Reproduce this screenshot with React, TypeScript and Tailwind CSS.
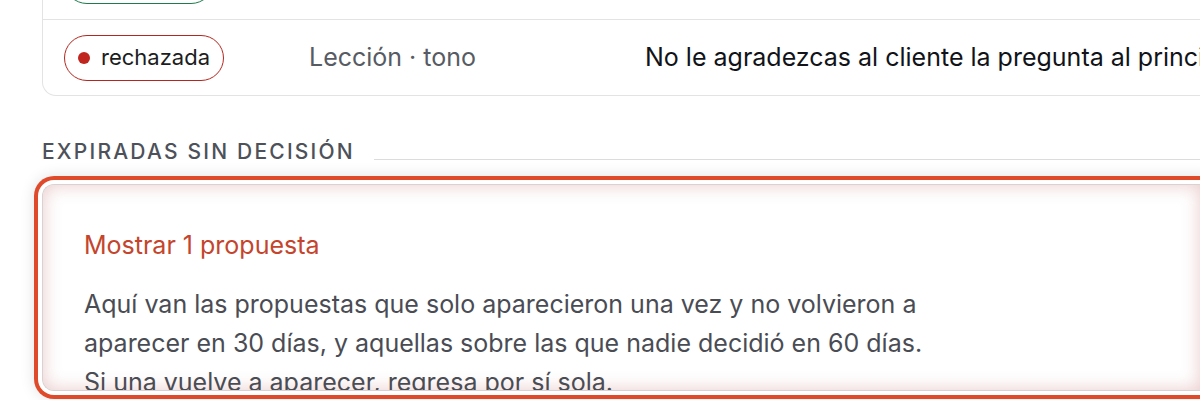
import React from 'react';

type Row = {
    status: 'aprobada' | 'rechazada';
    kind: string;
    text: string;
};

const rows: Row[] = [
    { status: 'aprobada', kind: 'Lección · saludo', text: 'Saluda al cliente por su nombre cuando lo conozcas' },
    { status: 'rechazada', kind: 'Lección · tono', text: 'No le agradezcas al cliente la pregunta al principio de cada respuesta' },
];

const StatusBadge: React.FC<{ status: Row['status'] }> = ({ status }) => {
    const isOk = status === 'aprobada';
    return (
        <span
            className={
                isOk
                    ? 'inline-flex h-[46px] items-center gap-[11px] rounded-full border-[1.5px] border-[#1f7a4d] pl-[13px] pr-[13px] text-[22px] text-[#1b1d21]'
                    : 'inline-flex h-[46px] items-center gap-[11px] rounded-full border-[1.5px] border-[#b3271f] pl-[13px] pr-[13px] text-[22px] text-[#1b1d21]'
            }
        >
            <span className={isOk ? 'h-[12px] w-[12px] rounded-full bg-[#1f8a55]' : 'h-[12px] w-[12px] rounded-full bg-[#c0261d]'} />
            {status}
        </span>
    );
};

export default function App() {
    return (
        <div className="min-h-[400px] overflow-hidden bg-white font-['Inter',sans-serif]">
            <div className="-mt-[58px] pl-[42px]">
                {/* tabla de decisiones recientes */}
                <div className="overflow-hidden rounded-l-[14px] border border-r-0 border-[#e3e3e3]">
                    {rows.map((row, i) => (
                        <div
                            key={row.status}
                            className={
                                i === 0
                                    ? 'flex h-[76px] items-center whitespace-nowrap'
                                    : 'flex h-[76px] items-center whitespace-nowrap border-t border-[#e3e3e3]'
                            }
                        >
                            <div className="w-[266px] shrink-0 pl-[21px]">
                                <StatusBadge status={row.status} />
                            </div>
                            <div className="w-[336px] shrink-0 text-[25px] text-[#575b63]">{row.kind}</div>
                            <div className="text-[25px] text-[#111318]">{row.text}</div>
                        </div>
                    ))}
                </div>

                {/* sección expiradas */}
                <div className="mt-[45px] flex items-end gap-[19px]">
                    <h2 className="whitespace-nowrap text-[21px] font-medium uppercase leading-[22px] tracking-[0.105em] text-[#4d5159]">
                        Expiradas sin decisión
                    </h2>
                    <div className="mb-[3px] h-px flex-1 bg-[#dcdcdc]" />
                </div>

                <div className="mt-[21px] h-[207px] overflow-hidden rounded-l-[12px] border border-r-0 border-[#d9d2d2] bg-white shadow-[inset_0_0_18px_rgba(190,90,90,0.32),0_0_0_4px_#ffffff,0_0_0_8px_#df4a2b,0_0_14px_9px_rgba(0,0,0,0.10)]">
                    <div className="pl-[41px] pt-[45px]">
                        <div className="text-[25px] leading-[30px] text-[#c4452c]">Mostrar 1 propuesta</div>
                        <p className="mt-[25px] max-w-[860px] text-[25px] leading-[39px] text-[#4a4c54]">
                            Aquí van las propuestas que solo aparecieron una vez y no volvieron a<br />
                            aparecer en 30 días, y aquellas sobre las que nadie decidió en 60 días.<br />
                            Si una vuelve a aparecer, regresa por sí sola.
                        </p>
                    </div>
                </div>
            </div>
        </div>
    );
}
